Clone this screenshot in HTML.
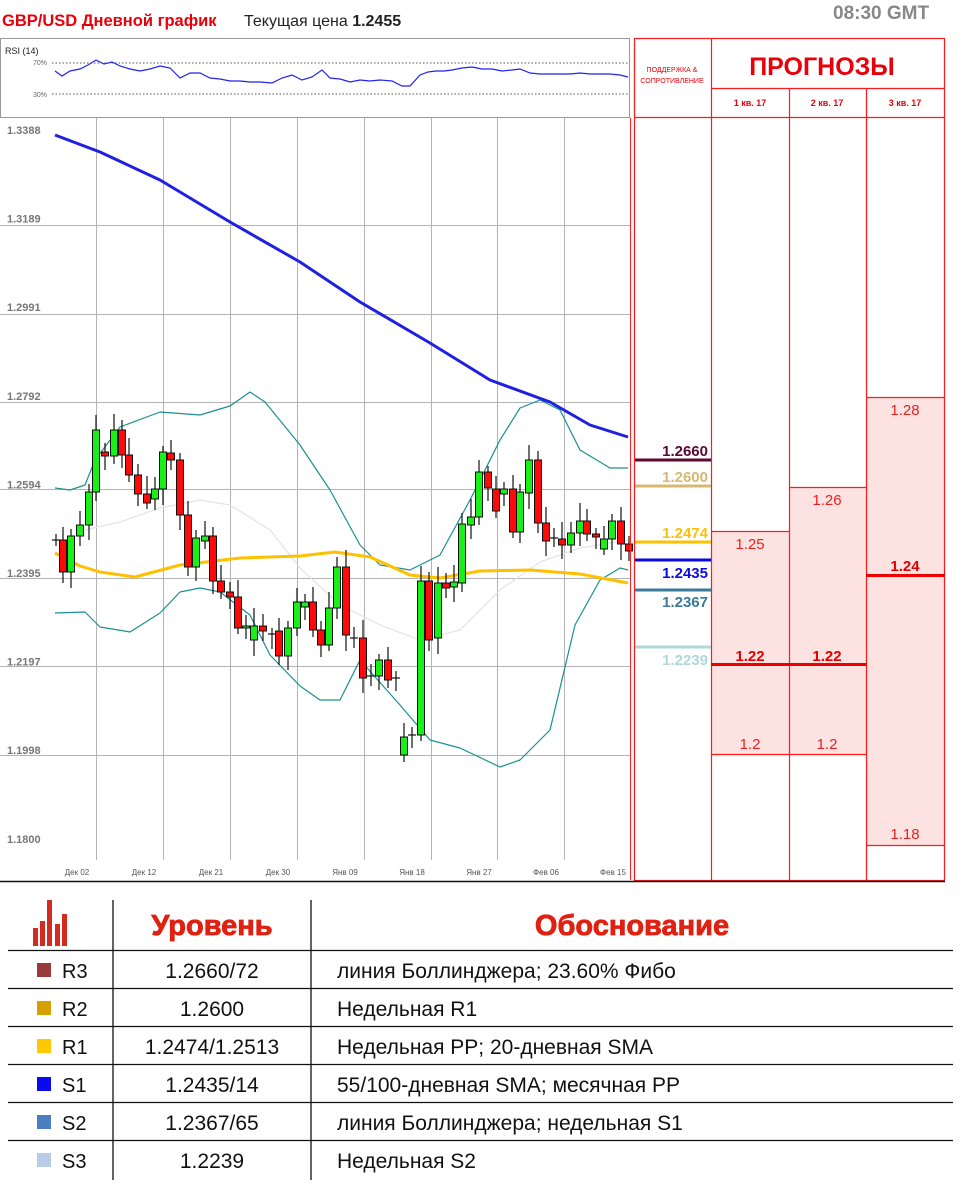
<!DOCTYPE html>
<html><head><meta charset="utf-8"><style>
body{margin:0;width:964px;height:1193px;background:#fff;font-family:"Liberation Sans",sans-serif;position:relative;overflow:hidden}
.a{position:absolute}
</style></head><body>
<div class="a" style="left:2px;top:12px;font-size:16.5px;font-weight:bold;color:#e8000a">GBP/USD Дневной график</div>
<div class="a" style="left:244px;top:13px;font-size:16px;color:#222">Текущая цена <b>1.2455</b></div>
<div class="a" style="left:833px;top:3px;font-size:19px;font-weight:bold;color:#888">08:30 GMT</div>
<svg class="a" style="left:0;top:0" width="964" height="890" id="s">
<rect x="0.5" y="38.5" width="629" height="79" fill="#fff" stroke="#999"/>
<text x="5" y="54" font-size="9" fill="#222">RSI (14)</text>
<text x="33" y="65" font-size="7" fill="#666">70%</text>
<text x="33" y="97" font-size="7" fill="#666">30%</text>
<line x1="52" y1="63" x2="628" y2="63" stroke="#555" stroke-dasharray="1.5,2"/>
<line x1="52" y1="94" x2="628" y2="94" stroke="#555" stroke-dasharray="1.5,2"/>
<polyline fill="none" stroke="#2222ee" stroke-width="1.2" points="55,71 62,76 70,71 80,69 88,65 96,60 104,64 112,62 120,66 130,69 140,71 150,69 160,66 170,68 180,78 190,73 200,73 210,78 220,79 230,81 240,81 250,82 260,82 272,83 282,78 292,75 302,80 312,77 322,70 330,78 340,79 350,82 360,80 370,81 380,80 392,81 402,86 410,86 420,75 428,72 436,71 444,71 452,70 462,68 472,67 482,69 492,69 502,71 512,70 520,69 530,73 540,74 550,74 560,74 570,74 580,73 590,74 600,74 610,74 620,75 628,77"/>
<g id="grid" stroke="#b4b4b4" stroke-width="1"></g>
<g id="lines"></g>
<g id="cnd"></g>
<line x1="630.5" y1="118" x2="630.5" y2="880" stroke="#ff2020"/>
<rect x="866" y="397" width="79" height="448" fill="#fde2e2"/>
<rect x="711" y="531" width="78" height="223" fill="#fde2e2"/>
<rect x="789" y="487" width="77" height="267" fill="#fde2e2"/>
<g stroke="#ff1a1a" stroke-width="1.2" fill="none">
<rect x="634.5" y="38.5" width="310" height="842"/>
<line x1="711.5" y1="38" x2="711.5" y2="880"/>
<line x1="711" y1="88.5" x2="945" y2="88.5"/>
<line x1="789.5" y1="88" x2="789.5" y2="880"/>
<line x1="866.5" y1="88" x2="866.5" y2="880"/>
<line x1="634" y1="117.5" x2="945" y2="117.5"/>
<line x1="711" y1="531.5" x2="789" y2="531.5"/>
<line x1="711" y1="754.5" x2="866" y2="754.5"/>
<line x1="789" y1="487.5" x2="866" y2="487.5"/>
<line x1="866" y1="397.5" x2="945" y2="397.5"/>
<line x1="866" y1="845.5" x2="945" y2="845.5"/>
</g>
<line x1="711" y1="664.5" x2="866" y2="664.5" stroke="#ee0000" stroke-width="3"/>
<line x1="866" y1="575.5" x2="945" y2="575.5" stroke="#ee0000" stroke-width="3"/>
<text x="672" y="72" font-size="7" fill="#e8000a" text-anchor="middle">ПОДДЕРЖКА &amp;</text>
<text x="672" y="83" font-size="7" fill="#e8000a" text-anchor="middle">СОПРОТИВЛЕНИЕ</text>
<text x="822" y="75" font-size="25" font-weight="bold" fill="#e8000a" text-anchor="middle">ПРОГНОЗЫ</text>
<g font-size="9" font-weight="bold" fill="#e8000a" text-anchor="middle"><text x="750" y="106">1 кв. 17</text><text x="827" y="106">2 кв. 17</text><text x="905" y="106">3 кв. 17</text></g>
<g font-size="15" fill="#e82020" text-anchor="middle">
<text x="750" y="549">1.25</text><text x="750" y="749">1.2</text>
<text x="827" y="505">1.26</text><text x="827" y="749">1.2</text>
<text x="905" y="415">1.28</text><text x="905" y="839">1.18</text></g>
<g font-size="15" font-weight="bold" fill="#e00000" text-anchor="middle">
<text x="750" y="661">1.22</text><text x="827" y="661">1.22</text><text x="905" y="571">1.24</text></g>
<g stroke-width="3">
<line x1="635" y1="460" x2="711" y2="460" stroke="#5a0a30"/>
<line x1="635" y1="486" x2="711" y2="486" stroke="#d8b870"/>
<line x1="635" y1="542" x2="711" y2="542" stroke="#ffc000"/>
<line x1="635" y1="560" x2="711" y2="560" stroke="#0a0ae0"/>
<line x1="635" y1="590" x2="711" y2="590" stroke="#3a7a9a"/>
<line x1="635" y1="647" x2="711" y2="647" stroke="#b0d8d8"/></g>
<g font-size="15" font-weight="bold" text-anchor="end">
<text x="708" y="456" fill="#5a0a30">1.2660</text>
<text x="708" y="482" fill="#d8b870">1.2600</text>
<text x="708" y="538" fill="#ffc000">1.2474</text>
<text x="708" y="578" fill="#0a0ae0">1.2435</text>
<text x="708" y="607" fill="#3a7a9a">1.2367</text>
<text x="708" y="665" fill="#b0d8d8">1.2239</text></g>
<line x1="0" y1="881.5" x2="945" y2="881.5" stroke="#111" stroke-width="1.5"/>
</svg>
<svg class="a" style="left:0;top:890px" width="964" height="303">
<g fill="#d42a20"><rect x="33" y="38" width="5" height="18"/><rect x="40" y="31" width="5" height="25"/><rect x="47" y="10" width="5" height="46"/><rect x="55" y="34" width="5" height="22"/><rect x="62" y="24" width="5" height="32"/></g>
<g stroke="#111" stroke-width="1.3">
<line x1="8" y1="60.5" x2="953" y2="60.5"/><line x1="8" y1="98.5" x2="953" y2="98.5"/><line x1="8" y1="136.5" x2="953" y2="136.5"/><line x1="8" y1="174.5" x2="953" y2="174.5"/><line x1="8" y1="212.5" x2="953" y2="212.5"/><line x1="8" y1="250.5" x2="953" y2="250.5"/>
<line x1="113" y1="10" x2="113" y2="290"/><line x1="311" y1="10" x2="311" y2="290"/></g>
<g font-size="29" font-weight="bold" fill="#e02010" text-anchor="middle" stroke="#e02010" stroke-width="0.8"><text x="212" y="45">Уровень</text><text x="632" y="45">Обоснование</text></g>
<rect x="37" y="73" width="14" height="14" fill="#9a3b3b"/>
<rect x="37" y="111" width="14" height="14" fill="#d6a000"/>
<rect x="37" y="149" width="14" height="14" fill="#ffc800"/>
<rect x="37" y="187" width="14" height="14" fill="#0a0af0"/>
<rect x="37" y="225" width="14" height="14" fill="#4a7fc0"/>
<rect x="37" y="263" width="14" height="14" fill="#b8cce8"/>
<g font-size="20" fill="#111">
<text x="62" y="88">R3</text><text x="62" y="126">R2</text><text x="62" y="164">R1</text><text x="62" y="202">S1</text><text x="62" y="240">S2</text><text x="62" y="278">S3</text>
<g text-anchor="middle" font-size="21"><text x="212" y="88">1.2660/72</text><text x="212" y="126">1.2600</text><text x="212" y="164">1.2474/1.2513</text><text x="212" y="202">1.2435/14</text><text x="212" y="240">1.2367/65</text><text x="212" y="278">1.2239</text></g>
<g font-size="21"><text x="337" y="88">линия Боллинджера; 23.60% Фибо</text><text x="337" y="126">Недельная R1</text><text x="337" y="164">Недельная PP; 20-дневная SMA</text><text x="337" y="202">55/100-дневная SMA; месячная PP</text><text x="337" y="240">линия Боллинджера; недельная S1</text><text x="337" y="278">Недельная S2</text></g></g>
</svg>
<script>
var NS="http://www.w3.org/2000/svg";
function el(p,t,a){var e=document.createElementNS(NS,t);for(var k in a)e.setAttribute(k,a[k]);p.appendChild(e);return e;}
var g=document.getElementById("grid");
var hy=[225,314,402,489,578,666,755];
hy.forEach(function(y){el(g,"line",{x1:0,y1:y+.5,x2:630,y2:y+.5});});
var vx=[96,163,230,297,364,431,497,564];
vx.forEach(function(x){el(g,"line",{x1:x+.5,y1:118,x2:x+.5,y2:860});});
var s=document.getElementById("s");
var lab=["1.3388","1.3189","1.2991","1.2792","1.2594","1.2395","1.2197","1.1998","1.1800"];
lab.forEach(function(t,i){el(s,"text",{x:7,y:134+i*88.6,"font-size":"11","font-weight":"bold",fill:"#777"}).textContent=t;});
var xl=["Дек 02","Дек 12","Дек 21","Дек 30","Янв 09","Янв 18","Янв 27","Фев 06","Фев 15"];
xl.forEach(function(t,i){el(s,"text",{x:77+i*67,y:875,"font-size":"8",fill:"#555","text-anchor":"middle"}).textContent=t;});
var L=document.getElementById("lines");
function pl(pts,c,w){el(L,"polyline",{points:pts,fill:"none",stroke:c,"stroke-width":w,"stroke-linejoin":"round"});}
pl("85,530 120,522 160,508 200,500 230,505 270,530 300,568 340,605 380,625 420,640 460,630 500,590 540,562 580,548 628,540","#e4e4e4",1.2);
pl("55,488 70,490 85,485 95,460 120,427 160,412 200,415 230,406 250,392 265,402 300,445 330,490 360,545 380,565 410,570 440,555 470,500 500,440 520,408 540,400 560,410 580,450 610,468 628,468","#1a9090",1.2);
pl("55,613 85,612 100,627 130,632 160,613 180,592 200,588 220,592 250,615 270,655 300,686 320,700 340,700 360,660 400,705 430,740 460,748 500,767 520,760 550,730 575,625 600,580 620,568 628,570","#1a9090",1.2);
pl("55,135 100,152 160,180 230,222 300,262 360,302 430,343 490,380 550,402 590,425 628,437","#2020e0",3);
pl("55,553 80,566 100,572 135,577 180,565 240,558 300,556 335,552 370,557 410,575 440,578 480,571 530,570 580,574 628,583","#ffc000",3);
var C=document.getElementById("cnd");
var d=[[56,540,540],[63,540,572],[71,572,536],[80,536,525],[89,525,492],[96,492,430],[105,452,456],[114,456,430],[122,430,455],[129,455,475],[138,475,494],[147,494,503],[155,499,489],[163,489,452],[171,453,460],[180,460,515],[188,515,567],[196,567,538],[205,541,536],[213,536,581],[221,581,592],[230,592,597],[238,597,628],[246,628,626],[254,640,626],[263,626,631],[272,634,634],[279,631,656],[288,656,628],[297,628,602],[305,607,602],[313,602,630],[321,630,645],[329,645,608],[337,608,567],[346,567,635],[354,638,638],[363,638,678],[371,677,676],[379,676,660],[388,660,680],[396,678,678],[404,755,737],[412,736,735],[421,735,581],[429,581,640],[438,638,583],[446,583,588],[454,587,582],[462,583,524],[471,525,517],[479,517,472],[488,472,488],[496,489,511],[504,494,489],[513,489,532],[520,532,492],[529,493,460],[538,460,523],[546,523,541],[554,538,538],[562,539,545],[571,545,533],[580,533,521],[587,521,534],[596,534,537],[604,549,539],[612,539,521],[621,521,544],[629,544,551]];
d.forEach(function(c,i){var x=c[0],o=c[1],cl=c[2],t=Math.min(o,cl),b=Math.max(o,cl);
var h=t-6-(i*7%13),l=b+6+(i*5%11);
el(C,"line",{x1:x,y1:h,x2:x,y2:l,stroke:"#111","stroke-width":1.2});
if(b-t<2){el(C,"line",{x1:x-4,y1:t,x2:x+4,y2:t,stroke:"#111","stroke-width":1.2});}
else el(C,"rect",{x:x-3.5,y:t,width:7,height:b-t,fill:cl<o?"#18f018":"#ff0a0a",stroke:"#111","stroke-width":1});});
</script>
</body></html>
